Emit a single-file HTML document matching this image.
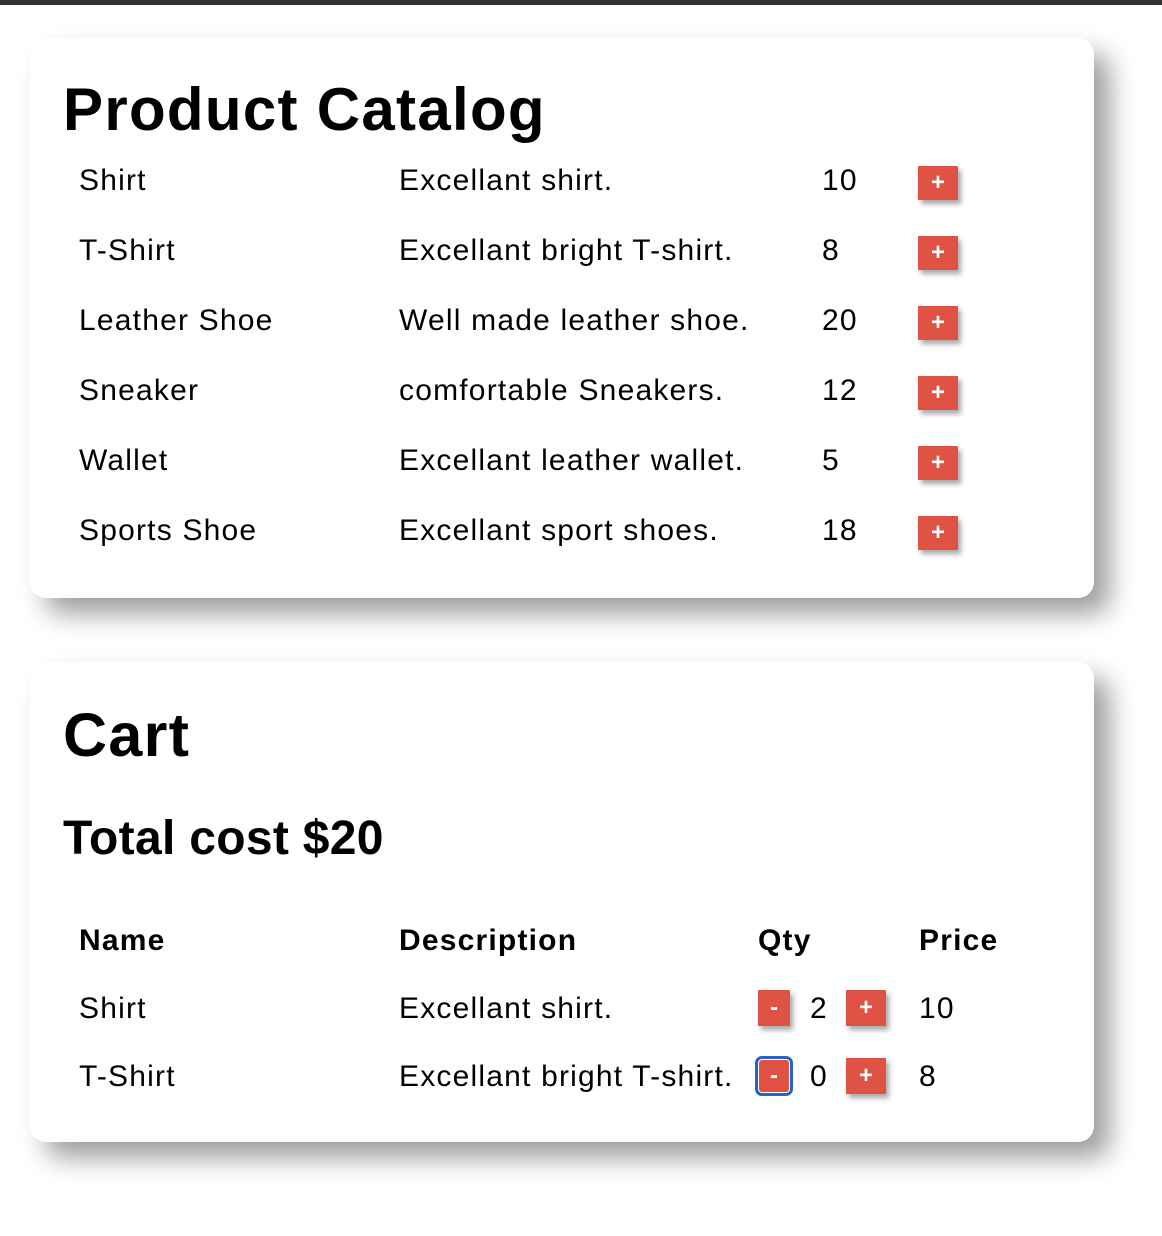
<!DOCTYPE html>
<html><head><meta charset="utf-8"><style>
body{margin:0;width:1162px;height:1236px;background:#fff;position:relative;overflow:hidden;font-family:"Liberation Sans",sans-serif;color:#000}
.bar{position:absolute;left:0;top:0;width:1162px;height:5px;background:#333}
.card{position:absolute;left:30px;width:1064px;background:#fff;border-radius:16px;box-shadow:16px 16px 26px rgba(0,0,0,.38)}
.t{position:absolute;font-size:30px;letter-spacing:1.2px;line-height:36px;height:36px;white-space:nowrap}
.b{font-weight:bold}
.btn{position:absolute;width:40px;height:34px;background:#e05244;color:#fff;font-weight:bold;font-size:24px;line-height:34px;text-align:center;box-shadow:3px 4px 5px rgba(0,0,0,.35)}
.m{width:32px}
.foc{outline:3px solid #2563c9;outline-offset:1px;border-radius:3px}
</style></head><body>
<div class="bar"></div>
<div class="card" style="top:38px;height:560px"></div>
<div class="card" style="top:662px;height:480px"></div>

<div class="t b" style="left:63px;top:74px;font-size:60px;letter-spacing:1.3px;line-height:72px;height:72px">Product Catalog</div>

<div class="t" style="left:79px;top:163px">Shirt</div><div class="t" style="left:399px;top:163px">Excellant shirt.</div><div class="t" style="left:822px;top:163px">10</div><div class="btn" style="left:918px;top:166px">+</div>
<div class="t" style="left:79px;top:233px">T-Shirt</div><div class="t" style="left:399px;top:233px">Excellant bright T-shirt.</div><div class="t" style="left:822px;top:233px">8</div><div class="btn" style="left:918px;top:236px">+</div>
<div class="t" style="left:79px;top:303px">Leather Shoe</div><div class="t" style="left:399px;top:303px">Well made leather shoe.</div><div class="t" style="left:822px;top:303px">20</div><div class="btn" style="left:918px;top:306px">+</div>
<div class="t" style="left:79px;top:373px">Sneaker</div><div class="t" style="left:399px;top:373px">comfortable Sneakers.</div><div class="t" style="left:822px;top:373px">12</div><div class="btn" style="left:918px;top:376px">+</div>
<div class="t" style="left:79px;top:443px">Wallet</div><div class="t" style="left:399px;top:443px">Excellant leather wallet.</div><div class="t" style="left:822px;top:443px">5</div><div class="btn" style="left:918px;top:446px">+</div>
<div class="t" style="left:79px;top:513px">Sports Shoe</div><div class="t" style="left:399px;top:513px">Excellant sport shoes.</div><div class="t" style="left:822px;top:513px">18</div><div class="btn" style="left:918px;top:516px">+</div>

<div class="t b" style="left:63px;top:699px;font-size:61px;letter-spacing:1.3px;line-height:72px;height:72px">Cart</div>
<div class="t b" style="left:63px;top:810px;font-size:48px;letter-spacing:0.3px;line-height:58px;height:58px">Total cost $20</div>

<div class="t b" style="left:79px;top:923px">Name</div><div class="t b" style="left:399px;top:923px">Description</div><div class="t b" style="left:758px;top:923px">Qty</div><div class="t b" style="left:919px;top:923px">Price</div>

<div class="t" style="left:79px;top:991px">Shirt</div><div class="t" style="left:399px;top:991px">Excellant shirt.</div>
<div class="btn m" style="left:758px;top:990px;height:36px;line-height:36px">-</div><div class="t" style="left:810px;top:991px">2</div><div class="btn" style="left:846px;top:990px;height:36px;line-height:36px">+</div><div class="t" style="left:919px;top:991px">10</div>

<div class="t" style="left:79px;top:1059px">T-Shirt</div><div class="t" style="left:399px;top:1059px">Excellant bright T-shirt.</div>
<div class="btn m foc" style="left:759px;top:1060px;width:30px;height:32px;line-height:32px;box-shadow:none">-</div><div class="t" style="left:810px;top:1059px">0</div><div class="btn" style="left:846px;top:1058px;height:36px;line-height:36px">+</div><div class="t" style="left:919px;top:1059px">8</div>
</body></html>
